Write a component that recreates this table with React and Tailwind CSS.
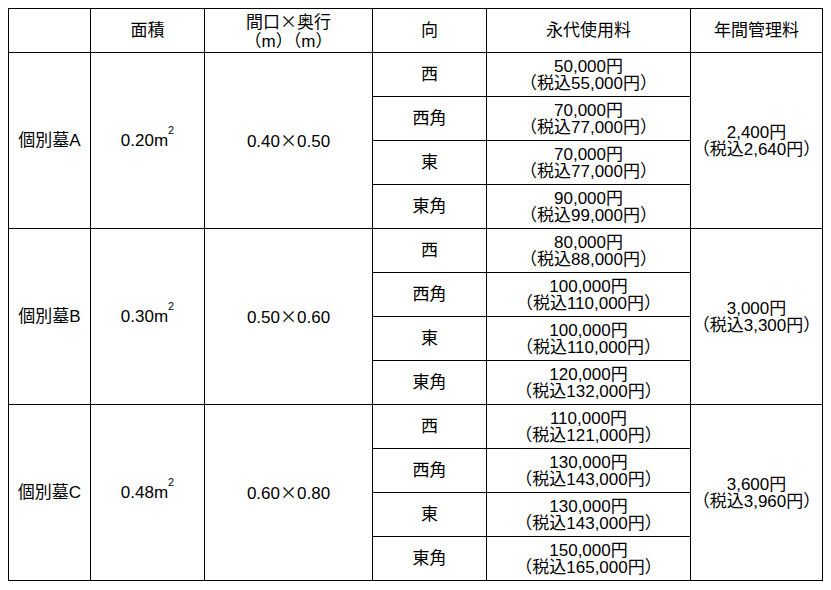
const groups = [
  {
    name: '個別墓A',
    area: '0.20',
    size: ['0.40', '0.50'],
    fee: '2,400円',
    feeTax: '（税込2,640円）',
    rows: [
      ['西', '50,000円', '（税込55,000円）'],
      ['西角', '70,000円', '（税込77,000円）'],
      ['東', '70,000円', '（税込77,000円）'],
      ['東角', '90,000円', '（税込99,000円）'],
    ],
  },
  {
    name: '個別墓B',
    area: '0.30',
    size: ['0.50', '0.60'],
    fee: '3,000円',
    feeTax: '（税込3,300円）',
    rows: [
      ['西', '80,000円', '（税込88,000円）'],
      ['西角', '100,000円', '（税込110,000円）'],
      ['東', '100,000円', '（税込110,000円）'],
      ['東角', '120,000円', '（税込132,000円）'],
    ],
  },
  {
    name: '個別墓C',
    area: '0.48',
    size: ['0.60', '0.80'],
    fee: '3,600円',
    feeTax: '（税込3,960円）',
    rows: [
      ['西', '110,000円', '（税込121,000円）'],
      ['西角', '130,000円', '（税込143,000円）'],
      ['東', '130,000円', '（税込143,000円）'],
      ['東角', '150,000円', '（税込165,000円）'],
    ],
  },
];

const cell = 'border border-black text-center align-middle p-0 h-[44px]';
const times = "font-['Noto_Sans_CJK_JP',sans-serif]";

export default function App() {
  return (
    <div
      className="min-h-screen bg-white text-black pt-[8px] pl-[8px] text-[17px] leading-[17px]"
      style={{ fontFamily: '"Liberation Sans", "Noto Sans CJK JP", sans-serif' }}
    >
      <table className="border-collapse table-fixed w-[815px]">
        <colgroup>
          <col className="w-[82px]" />
          <col className="w-[114px]" />
          <col className="w-[168px]" />
          <col className="w-[114px]" />
          <col className="w-[204px]" />
          <col className="w-[132px]" />
        </colgroup>
        <thead>
          <tr>
            <th className={`${cell} font-normal`}></th>
            <th className={`${cell} font-normal`}>面積</th>
            <th className={`${cell} font-normal leading-[19px]`}>
              <div>
                間口<span className={times}>×</span>奥行
              </div>
              <div>（m）（m）</div>
            </th>
            <th className={`${cell} font-normal`}>向</th>
            <th className={`${cell} font-normal`}>永代使用料</th>
            <th className={`${cell} font-normal`}>年間管理料</th>
          </tr>
        </thead>
        <tbody>
          {groups.map((g) =>
            g.rows.map((r, i) => (
              <tr key={g.name + i}>
                {i === 0 && (
                  <>
                    <td rowSpan={4} className={cell}>{g.name}</td>
                    <td rowSpan={4} className={cell}>
                      {g.area}m<sup className="text-[11px] align-super">2</sup>
                    </td>
                    <td rowSpan={4} className={cell}>
                      {g.size[0]}
                      <span className={times}>×</span>
                      {g.size[1]}
                    </td>
                  </>
                )}
                <td className={cell}>{r[0]}</td>
                <td className={cell}>
                  <div>{r[1]}</div>
                  <div>{r[2]}</div>
                </td>
                {i === 0 && (
                  <td rowSpan={4} className={cell}>
                    <div>{g.fee}</div>
                    <div>{g.feeTax}</div>
                  </td>
                )}
              </tr>
            ))
          )}
        </tbody>
      </table>
    </div>
  );
}
